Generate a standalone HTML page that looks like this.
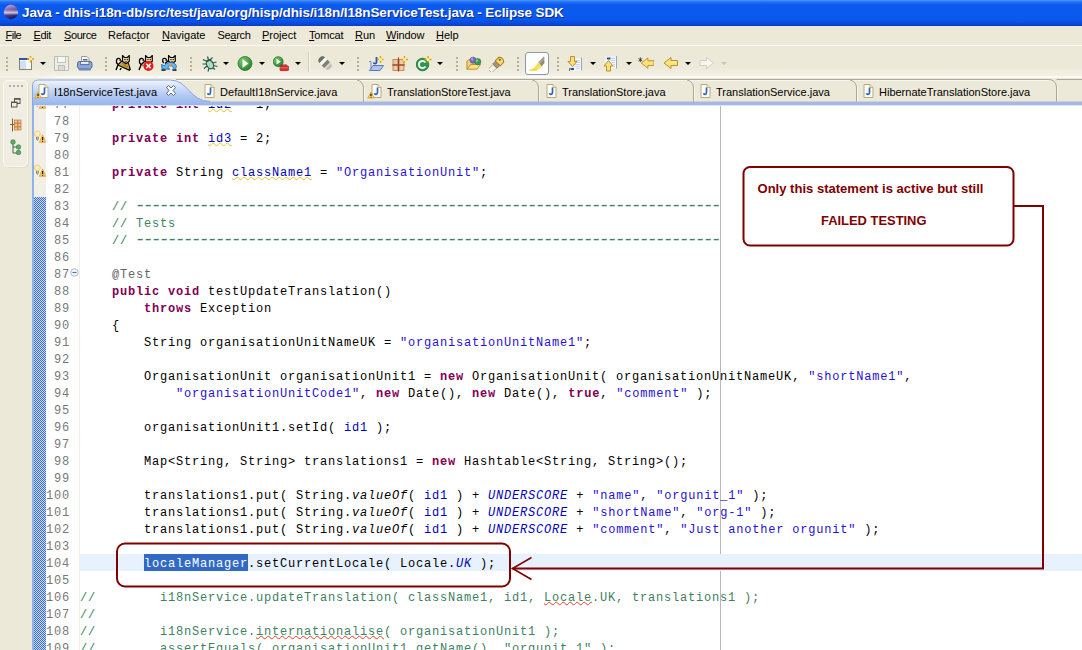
<!DOCTYPE html>
<html>
<head>
<meta charset="utf-8">
<title>Java - Eclipse SDK</title>
<style>
html,body{margin:0;padding:0}
body{width:1082px;height:650px;overflow:hidden;position:relative;background:#ECE9D8;font-family:"Liberation Sans",sans-serif;color:#000}
.abs{position:absolute}
#title{position:absolute;left:0;top:0;width:1082px;height:26px;background:linear-gradient(to bottom,#4A98FF 0px,#2070F4 2px,#0C58EA 5px,#0B5AF0 12px,#0B58EE 19px,#0A4CDC 23px,#0A3CC4 26px)}
#title .t{position:absolute;left:22px;top:4px;height:17px;line-height:17px;font-size:13.5px;font-weight:bold;color:#fff;white-space:nowrap;letter-spacing:-0.1px;text-shadow:1px 1px 0 #0A2A8C}
#menubar{position:absolute;left:0;top:26px;width:1082px;height:19px;background:#ECE9D8}
#menubar span{position:absolute;top:3px;font-size:11px;line-height:13px;white-space:nowrap;display:block}
#menubar u{text-decoration:underline;text-underline-offset:1px}
#tbline1{position:absolute;left:0;top:45px;width:1082px;height:1px;background:#FAF9F3}
#toolbar{position:absolute;left:0;top:46px;width:1082px;height:30px;background:linear-gradient(to bottom,#ECE9D8 0,#ECE9D8 21px,#F3F1E6 30px)}
#tbline2{position:absolute;left:0px;top:76px;width:1082px;height:2px;background:linear-gradient(to right,#F3F1E6 0,#F3F1E6 30px,#FBFAF5 60px)}
.grip{position:absolute;top:56px;width:2px;height:15px;background:repeating-linear-gradient(to bottom,transparent 0,transparent 1px,#B3B09C 1px,#B3B09C 3px,transparent 3px,transparent 4px)}
.dd{position:absolute;top:62px;width:0;height:0;border-left:3px solid transparent;border-right:3px solid transparent;border-top:3px solid #000}
.ico{position:absolute;top:56px;width:16px;height:16px}
/* side bar */
#side{position:absolute;left:4px;top:81px;width:23px;height:85px;border-radius:4px;background:#F0EEE2;box-shadow:0 0 0 1px #FAF9F3, 1px 1px 0 1px #E0DDCB}
/* tabs */
#tabrow{position:absolute;left:32px;top:80px;width:1050px;height:23px;background:#ECE9D8}
.tab{position:absolute;top:86px;font-size:11px;line-height:13px;white-space:nowrap}
/* editor */
#editor{position:absolute;left:34px;top:103px;width:1048px;height:547px;background:#fff;overflow:hidden}
#lborder{position:absolute;left:32px;top:96px;width:2px;height:554px;background:#8FB3EA}
#ruler{position:absolute;left:34px;top:103px;width:12px;height:547px;background:#F2F0E6}
#rulerdots{position:absolute;left:34px;top:197px;width:12px;height:453px;background:repeating-conic-gradient(#3E72C9 0 25%,#C9D6EE 0 50%) 0 0/2px 2px}
#gutterline{position:absolute;left:79px;top:103px;width:1px;height:547px;background:#F1EFE7}
#margin{position:absolute;left:720px;top:103px;width:1px;height:547px;background:#B8B8B8}
#curline{position:absolute;left:80px;top:554px;width:1002px;height:17px;background:#E8F2FE}
#sel{position:absolute;left:144px;top:554px;width:104px;height:17px;background:#316AC5}
pre{margin:0;position:absolute;font-family:"Liberation Mono",monospace;font-size:12px;letter-spacing:0.8px;line-height:17px;white-space:pre}
#nums{left:38px;top:97px;width:32px;text-align:right;color:#787878}
#code{left:80px;top:97px;color:#000}
.k{color:#7F0055;font-weight:bold}
.s{color:#2810D8}
.f{color:#0000C0}
.sf{color:#0000C0;font-style:italic}
.i{font-style:italic}
.c{color:#3F7F5F}
.a{color:#646464}
.d{font-size:18px;letter-spacing:-2.8px;line-height:0;position:relative;top:0.5px;margin-left:-1.4px;margin-right:1.4px}
.w{text-decoration:underline wavy #E6C81E 1px;text-underline-offset:0px}
.r{text-decoration:underline wavy #E0402C 1px;text-underline-offset:0px}
.selt{color:#fff}
#anno{position:absolute;left:0;top:0;width:1082px;height:650px}
</style>
</head>
<body>
<div id="title"><svg class="abs" style="left:3px;top:4px" width="16" height="16" viewBox="0 0 16 16"><defs><linearGradient id="eg" x1="0" y1="0" x2="0.300" y2="1"><stop offset="0" stop-color="#C8B0E0"/><stop offset="0.450" stop-color="#7A62B0"/><stop offset="1" stop-color="#1E1E68"/></linearGradient></defs><circle cx="8" cy="8" r="7.200" fill="url(#eg)"/><path d="M1 7.200 H15 M0.800 8.500 H15.200 M1 9.800 H15" stroke="#F4F0FA" stroke-width="0.700"/></svg><div class="t">Java - dhis-i18n-db/src/test/java/org/hisp/dhis/i18n/I18nServiceTest.java - Eclipse SDK</div></div>
<div id="menubar">
<span style="left:5.5px;letter-spacing:-0.5px"><u>F</u>ile</span>
<span style="left:33.5px;letter-spacing:-0.4px"><u>E</u>dit</span>
<span style="left:64px;letter-spacing:-0.4px"><u>S</u>ource</span>
<span style="left:108px">Refac<u>t</u>or</span>
<span style="left:162px"><u>N</u>avigate</span>
<span style="left:217.5px;letter-spacing:-0.3px">Se<u>a</u>rch</span>
<span style="left:262px"><u>P</u>roject</span>
<span style="left:309px;letter-spacing:-0.2px"><u>T</u>omcat</span>
<span style="left:355px"><u>R</u>un</span>
<span style="left:386px;letter-spacing:-0.15px"><u>W</u>indow</span>
<span style="left:436px"><u>H</u>elp</span>
</div>
<div id="tbline1"></div>
<div id="toolbar"></div>
<div id="tbline2"></div>
<div class="grip" style="left:6px"></div><div class="grip" style="left:105px"></div><div class="grip" style="left:190px"></div><div class="grip" style="left:357px"></div><div class="grip" style="left:456px"></div><div class="grip" style="left:517px"></div><div class="grip" style="left:557px"></div>
<div class="dd" style="left:40px"></div><div class="dd" style="left:223px"></div><div class="dd" style="left:259px"></div><div class="dd" style="left:295px"></div><div class="dd" style="left:339px"></div><div class="dd" style="left:437px"></div><div class="dd" style="left:590px"></div><div class="dd" style="left:626px"></div><div class="dd" style="left:685px"></div><div class="dd" style="left:721px;border-top-color:#C9C6B6"></div>
<div class="abs" style="left:308px;top:52px;width:1px;height:20px;background:#CFCCBC"></div><div class="abs" style="left:309px;top:52px;width:1px;height:20px;background:#F8F7F1"></div>
<div class="abs" style="left:525px;top:52px;width:22px;height:21px;border:1px solid #8D9AAE;border-radius:3px;background:#FDFDFB;box-sizing:content-box"></div>
<svg class="ico" style="left:18px" viewBox="0 0 16 16"><rect x="1.500" y="2.500" width="12" height="11" fill="#F4F8FD" stroke="#8A8468"/><rect x="1" y="2" width="13" height="2" fill="#2F56A6"/><rect x="2" y="5" width="6" height="8" fill="#CFE0F5"/><path d="M12.500 -0.500 V6.500 M9 3 H16" stroke="#E0A800" stroke-width="1.600"/><circle cx="12.500" cy="3" r="1.600" fill="#FFF3A0"/></svg>
<svg class="ico" style="left:54px" viewBox="0 0 16 16"><path d="M0.500 0.500 H14.500 V14.500 H0.500 Z" fill="#ECEBE4" stroke="#BDBDB8"/><rect x="3.500" y="0.500" width="8" height="6" fill="#F7F7F4" stroke="#C3C3BE"/><rect x="4.500" y="9.500" width="6" height="5" fill="#DCDCD6" stroke="#BDBDB8"/></svg>
<svg class="ico" style="left:77px" viewBox="0 0 16 16"><path d="M4.500 6 V0.500 H10 L12 2.500 V6" fill="#F6F6F6" stroke="#9A9A9A"/><path d="M6 3.500 H10.500 M6 5 H10.500" stroke="#6A6A6A"/><rect x="0.500" y="5.500" width="14.500" height="7" rx="2" fill="#8FA6D4" stroke="#4A66A8"/><rect x="3.500" y="5.500" width="8.500" height="3" fill="#E9EEF8" stroke="#5E76B0"/><rect x="1.500" y="12" width="12.500" height="2.500" rx="1" fill="#6F88C0"/></svg>
<svg class="ico" style="left:115px;top:55px" viewBox="0 0 16 16"><path d="M3 9.500 C0 7 1.500 2.500 4.500 3.500 C5.500 4 5.500 5 5 6" fill="none" stroke="#000" stroke-width="1.300"/><path d="M7.500 5.500 L3 10 L1 15 M5 15 L7 11.500 M3.500 10 L15 15.500 M13 7.500 L15.300 15" fill="none" stroke="#000" stroke-width="1.400"/><path d="M7.500 6 L11 9 L13 8 L14.500 14.500 L4 10 Z" fill="#C9A23A"/><path d="M7 8 L9 9.500 M8.500 10.500 L11 10 M10 12 L13 11.500" stroke="#8A6A18" stroke-width="0.800"/><path d="M7.500 0.500 L9.500 2.500 H12.300 L14.300 0.500 V6.300 L11 8.800 L7.500 6.300 Z" fill="#EBD3A4" stroke="#000" stroke-width="1.100" stroke-linejoin="round"/><path d="M9.300 4.600 h1.200 M11.700 4.600 h1.200 M11 6 v1.600" stroke="#000" stroke-width="1"/></svg>
<svg class="ico" style="left:138px;top:55px" viewBox="0 0 16 16"><path d="M3 9.500 C0 7 1.500 2.500 4.500 3.500 C5.500 4 5.500 5 5 6" fill="none" stroke="#000" stroke-width="1.300"/><path d="M7.500 5.500 L3 10 L1 15 M13.500 6 V8" fill="none" stroke="#000" stroke-width="1.400"/><path d="M3.500 11 L6.500 10" stroke="#E08030" stroke-width="1.600"/><path d="M7.500 0.500 L9.500 2.500 H12.300 L14.300 0.500 V6.300 L11 8.800 L7.500 6.300 Z" fill="#EBD3A4" stroke="#000" stroke-width="1.100" stroke-linejoin="round"/><path d="M9.300 4.600 h1.200 M11.700 4.600 h1.200 M11 6 v1.600" stroke="#000" stroke-width="1"/><circle cx="10.500" cy="11" r="5" fill="#E61A1A"/><path d="M8.300 8.800 L12.700 13.200 M12.700 8.800 L8.300 13.200" stroke="#fff" stroke-width="1.600"/></svg>
<svg class="ico" style="left:161px;top:55px" viewBox="0 0 16 16"><path d="M3 8 C0.500 6 1.500 2.500 4.500 3.500 C5.500 4 5.500 5 5 6" fill="none" stroke="#000" stroke-width="1.300"/><path d="M7.500 5.500 L4 8.500 M0.500 15 H4.500 M11.500 15 H15.500" fill="none" stroke="#000" stroke-width="1.400"/><path d="M7.500 0.500 L9.500 2.500 H12.300 L14.300 0.500 V6.300 L11 8.800 L7.500 6.300 Z" fill="#EBD3A4" stroke="#000" stroke-width="1.100" stroke-linejoin="round"/><path d="M9.300 4.600 h1.200 M11.700 4.600 h1.200 M11 6 v1.600" stroke="#000" stroke-width="1"/><path d="M1 14 L0.500 9.500 L3.500 10.800 C5 6.800 12.500 6 15 10 C16 12.500 14.500 14.500 12 14.800 C13 11.800 11 10.200 8.800 10.600 C6.800 11 7 12.500 7.500 13 L8.800 14.300 Z" fill="#62B8F0" stroke="#1C5FA8" stroke-width="0.800"/><path d="M7.500 10.800 L10.800 9.300 L12 11.200 L9.500 11.800 Z" fill="#E8922A"/></svg>
<svg class="ico" style="left:202px" viewBox="0 0 16 16"><path d="M5.500 0.500 L6.500 4 M10.500 1.500 L8 4 M1 3.500 L5 5.500 M0.500 8 H4.500 M2 12.500 L5 10 M6 15.500 L7 12 M14.500 6 L11 7 M15.500 10.500 L11.500 9.500 M13 13.500 L10.500 11.500" stroke="#2B5B48" stroke-width="1.200" fill="none"/><ellipse cx="8" cy="8.500" rx="3.300" ry="4.600" transform="rotate(-28 8 8.500)" fill="#A9DDC0" stroke="#2B5B48" stroke-width="1.200"/><path d="M4.500 5.500 L8 3.500" stroke="#2B5B48" stroke-width="2"/></svg>
<svg class="ico" style="left:237px" viewBox="0 0 16 16"><defs><radialGradient id="gr1" cx="0.350" cy="0.300" r="0.800"><stop offset="0" stop-color="#7CCB6C"/><stop offset="1" stop-color="#1E7A2C"/></radialGradient></defs><circle cx="8" cy="7.500" r="7" fill="url(#gr1)" stroke="#2A7A34" stroke-width="0.800"/><path d="M5.500 3 L11.500 7.500 L5.500 12 Z" fill="#F4FBEF"/></svg>
<svg class="ico" style="left:273px" viewBox="0 0 17 16"><circle cx="5.500" cy="5.500" r="5.300" fill="url(#gr1)" stroke="#2A7A34" stroke-width="0.800"/><path d="M3.800 2.500 L8.300 5.500 L3.800 8.500 Z" fill="#F4FBEF"/><path d="M9.500 10 V9 H14 V10" fill="none" stroke="#A81818" stroke-width="1.200"/><rect x="7.500" y="10" width="9" height="5" rx="1" fill="#D83030" stroke="#A81818" stroke-width="0.800"/><path d="M7.500 12 H16.500" stroke="#F08080" stroke-width="0.800"/></svg>
<svg class="ico" style="left:317px" viewBox="0 0 16 16"><g transform="rotate(45 8 7)"><rect x="0.500" y="3" width="15" height="8" rx="4" fill="#B9B9B0"/><rect x="4" y="3" width="3.500" height="8" fill="#F4F4F0"/><rect x="7.500" y="3" width="3.500" height="8" fill="#7E8078"/><rect x="11" y="3" width="2" height="8" fill="#D8D8D0"/><path d="M0.500 7 a4 4 0 0 1 3.500 -4 v8 a4 4 0 0 1 -3.500 -4" fill="#6E7068"/></g></svg>
<svg class="ico" style="left:368px" viewBox="0 0 16 16"><path d="M1 5.500 H3 V12.500" fill="none" stroke="#6F8CC8" stroke-width="1"/><path d="M1.500 14.500 L5 9.500 H15.500 L12 14.500 Z" fill="#AFC4EC" stroke="#5878BC" stroke-width="1"/><path d="M8.500 1 V6 C8.500 8 6 8 5.500 6.500" fill="none" stroke="#2A55A8" stroke-width="1.800"/><path d="M12.500 0 V7 M9.500 3.500 H15.500" stroke="#E0A800" stroke-width="1.500"/><circle cx="12.500" cy="3.500" r="1.500" fill="#FFF3A0"/></svg>
<svg class="ico" style="left:392px" viewBox="0 0 16 16"><rect x="1" y="3.500" width="5" height="5" fill="#F2C9A4" stroke="#B87848" stroke-width="0.800"/><rect x="7" y="3.500" width="5" height="5" fill="#F2C9A4" stroke="#B87848" stroke-width="0.800"/><rect x="1" y="9.500" width="5" height="5" fill="#F2C9A4" stroke="#B87848" stroke-width="0.800"/><rect x="7" y="9.500" width="5" height="5" fill="#F2C9A4" stroke="#B87848" stroke-width="0.800"/><path d="M6.500 1.500 V15.500 M0 9 H13" stroke="#8B4A2B" stroke-width="1.200"/><path d="M12.500 0 V6.500 M9 3.500 H16" stroke="#E0A800" stroke-width="1.500"/><circle cx="12.500" cy="3.500" r="1.500" fill="#FFF3A0"/></svg>
<svg class="ico" style="left:416px" viewBox="0 0 16 16"><circle cx="6.500" cy="8.500" r="6.300" fill="#2F9650" stroke="#1E6E38" stroke-width="0.800"/><path d="M9.500 6.500 A3.600 3.600 0 1 0 9.500 10.500" fill="none" stroke="#EAF8EE" stroke-width="2"/><path d="M12 0 V6.500 M8.500 3.500 H15.500" stroke="#E0A800" stroke-width="1.500"/><circle cx="12" cy="3.500" r="1.500" fill="#FFF3A0"/></svg>
<svg class="ico" style="left:466px" viewBox="0 0 17 16"><path d="M1 13.500 V5 L3 3.500 H6.500 L8 5 H11 V8" fill="#F7D674" stroke="#B88A20" stroke-width="1"/><path d="M1 13.500 L5 8.500 H15.500 L11.500 13.500 Z" fill="#FBE08A" stroke="#B88A20" stroke-width="1"/><circle cx="7.500" cy="4" r="3.300" fill="#7A6CC8" stroke="#4A3E98" stroke-width="0.600"/><circle cx="6.500" cy="3" r="1.200" fill="#B8B0E8"/><circle cx="12.500" cy="5.500" r="3.300" fill="#3E9A5A" stroke="#24703C" stroke-width="0.600"/><circle cx="11.500" cy="4.500" r="1.200" fill="#8ED0A0"/></svg>
<svg class="ico" style="left:489px" viewBox="0 0 16 16"><g transform="rotate(-45 8 8)"><rect x="-2" y="5.500" width="7" height="5" fill="#FBF6E4" stroke="#B0A488" stroke-width="0.800"/><rect x="5" y="5" width="4" height="6" fill="#A39686" stroke="#7A6E60" stroke-width="0.800"/><path d="M9 4.500 H14 Q17.500 8 14 11.500 H9 Z" fill="#F6D874" stroke="#A87C20" stroke-width="1"/><circle cx="13" cy="7" r="1" fill="#7A5A10"/></g></svg>
<svg class="ico" style="left:529px" viewBox="0 0 16 16"><path d="M15 0.500 L9.500 6 L12.500 10.500 L15.500 7 Z" fill="#8E8A7E"/><path d="M15 0.500 L9.500 6 L11 8 L15.500 3 Z" fill="#A8A498"/><path d="M9.500 6 L12.500 10.500 C10 14.500 6 14.500 0.500 14 C5 13.500 6.500 10 9.500 6 Z" fill="#F8E04C"/><path d="M0.500 14 H8" stroke="#E8C820" stroke-width="1"/></svg>
<svg class="ico" style="left:567px" viewBox="0 0 16 16"><rect x="6.500" y="2.500" width="8" height="12" fill="#F4F7FC"/><path d="M14.500 1.500 V14.500" stroke="#9AA4B8" stroke-width="1"/><path d="M8 4.500 H13 M8 6.500 H13 M8 8.500 H13 M8 10.500 H13 M9 12.500 H13" stroke="#C4D2EC" stroke-width="1"/><path d="M2.500 12 V15" stroke="#6C7890" stroke-width="1"/><rect x="3.500" y="12" width="3.500" height="2" fill="#2E4E9C"/><path d="M3.500 0.500 H7.500 V5.500 H10 L5.500 10.500 L1 5.500 H3.500 Z" fill="#FFE07A" stroke="#B8902C" stroke-width="1"/></svg>
<svg class="ico" style="left:603px" viewBox="0 0 16 16"><rect x="2.500" y="0.500" width="11" height="12" fill="#F4F7FC"/><path d="M13.500 0 V12.500" stroke="#9AA4B8" stroke-width="1"/><path d="M8 2.500 H12 M8 4.500 H12 M9 6.500 H12 M10 8.500 H12 M10 10.500 H12" stroke="#C4D2EC" stroke-width="1"/><rect x="4" y="1.500" width="3.500" height="2" fill="#2E4E9C"/><path d="M3.500 15 H7.500 V10 H10 L5.500 4.500 L1 10 H3.500 Z" fill="#FFE07A" stroke="#B8902C" stroke-width="1"/></svg>
<svg class="ico" style="left:638px" viewBox="0 0 17 16"><path d="M2.500 1 V6 M0.500 2.200 L4.500 4.800 M4.500 2.200 L0.500 4.800" stroke="#303030" stroke-width="0.900"/><path d="M17 4.500 V9.500 H10.500 V12.500 L3.500 7 L10.500 1.500 V4.500 Z" fill="#FFE07A" stroke="#B8902C" stroke-width="1"/></svg>
<svg class="ico" style="left:663px" viewBox="0 0 16 16"><path d="M14.500 4.500 V9.500 H8 V12.500 L1 7 L8 1.500 V4.500 Z" fill="#FFE07A" stroke="#B8902C" stroke-width="1"/><path d="M8.500 5.500 H13.500 V6.500 H8.500 Z" fill="#FFF0B8"/></svg>
<svg class="ico" style="left:699px" viewBox="0 0 16 16"><path d="M1 4.500 V9.500 H7.500 V12.500 L14.500 7 L7.500 1.500 V4.500 Z" fill="#F7F6F0" stroke="#D2CFC0" stroke-width="1"/></svg>
<div id="side"></div>
<div class="abs" style="left:9px;top:85px;width:14px;height:2px;background:repeating-linear-gradient(to right,#B3B09C 0,#B3B09C 2px,transparent 2px,transparent 4px)"></div>
<svg class="abs" style="left:11px;top:98px" width="10" height="10" viewBox="0 0 10 10"><rect x="3.500" y="1" width="5.500" height="4.500" fill="#F1EFE4" stroke="#55524A" stroke-width="1"/><path d="M3 0.800 H9.500" stroke="#55524A" stroke-width="1.400"/><rect x="0.500" y="4.500" width="5.500" height="4.500" fill="#F1EFE4" stroke="#55524A" stroke-width="1"/><path d="M0 4.300 H6.500" stroke="#55524A" stroke-width="1.400"/></svg>
<svg class="abs" style="left:10px;top:118px" width="12" height="14" viewBox="0 0 12 14"><path d="M2.500 0.500 V13.500 M0 6.500 H5" stroke="#8B5A2B" stroke-width="1"/><rect x="4.500" y="2" width="3" height="3" fill="#F4C096" stroke="#C07838" stroke-width="0.700"/><rect x="8" y="2" width="3" height="3" fill="#F4C096" stroke="#C07838" stroke-width="0.700"/><rect x="4.500" y="5.500" width="3" height="3" fill="#F4C096" stroke="#C07838" stroke-width="0.700"/><rect x="8" y="5.500" width="3" height="3" fill="#F4C096" stroke="#C07838" stroke-width="0.700"/><rect x="4.500" y="9" width="3" height="3" fill="#F4C096" stroke="#C07838" stroke-width="0.700"/><rect x="8" y="9" width="3" height="3" fill="#F4C096" stroke="#C07838" stroke-width="0.700"/></svg>
<svg class="abs" style="left:10px;top:139px" width="12" height="16" viewBox="0 0 12 16"><path d="M3 4 V14 H8 M3 8 H8" fill="none" stroke="#3A6A48" stroke-width="1"/><circle cx="3" cy="3" r="2.300" fill="#5EA868" stroke="#38784A" stroke-width="0.600"/><circle cx="8.500" cy="8" r="2.300" fill="#5EA868" stroke="#38784A" stroke-width="0.600"/><circle cx="8.500" cy="13.500" r="2.300" fill="#5EA868" stroke="#38784A" stroke-width="0.600"/></svg>
<div id="editor"></div>
<div id="ruler"></div>
<div id="rulerdots"></div>
<div id="gutterline"></div>
<div id="margin"></div>
<div id="curline"></div>
<div id="sel"></div>
<pre id="nums">77
78
79
80
81
82
83
84
85
86
87
88
89
90
91
92
93
94
95
96
97
98
99
100
101
102
103
104
105
106
107
108
109</pre>
<pre id="code">    <span class="k">private</span> <span class="k">int</span> <span class="f w">id2</span> = 1;

    <span class="k">private</span> <span class="k">int</span> <span class="f w">id3</span> = 2;

    <span class="k">private</span> String <span class="f w">className1</span> = <span class="s">"OrganisationUnit"</span>;

    <span class="c">// <span class="d">-------------------------------------------------------------------------</span></span>
    <span class="c">// Tests</span>
    <span class="c">// <span class="d">-------------------------------------------------------------------------</span></span>

    <span class="a">@Test</span>
    <span class="k">public</span> <span class="k">void</span> testUpdateTranslation()
        <span class="k">throws</span> Exception
    {
        String organisationUnitNameUK = <span class="s">"organisationUnitName1"</span>;

        OrganisationUnit organisationUnit1 = <span class="k">new</span> OrganisationUnit( organisationUnitNameUK, <span class="s">"shortName1"</span>,
            <span class="s">"organisationUnitCode1"</span>, <span class="k">new</span> Date(), <span class="k">new</span> Date(), <span class="k">true</span>, <span class="s">"comment"</span> );

        organisationUnit1.setId( <span class="f">id1</span> );

        Map&lt;String, String&gt; translations1 = <span class="k">new</span> Hashtable&lt;String, String&gt;();

        translations1.put( String.<span class="i">valueOf</span>( <span class="f">id1</span> ) + <span class="sf">UNDERSCORE</span> + <span class="s">"name"</span>, <span class="s">"orgunit_1"</span> );
        translations1.put( String.<span class="i">valueOf</span>( <span class="f">id1</span> ) + <span class="sf">UNDERSCORE</span> + <span class="s">"shortName"</span>, <span class="s">"org-1"</span> );
        translations1.put( String.<span class="i">valueOf</span>( <span class="f">id1</span> ) + <span class="sf">UNDERSCORE</span> + <span class="s">"comment"</span>, <span class="s">"Just another orgunit"</span> );

        <span class="selt">localeManager</span>.setCurrentLocale( Locale.<span class="sf">UK</span> );

<span class="c">//        i18nService.updateTranslation( className1, id1, <span class="r">Locale</span>.UK, translations1 );</span>
<span class="c">//</span>
<span class="c">//        i18nService.<span class="r">internationalise</span>( organisationUnit1 );</span>
<span class="c">//        assertEquals( organisationUnit1.getName(), "<span class="r">orgunit</span>_1" );</span></pre>
<svg class="abs" style="left:34px;top:96px" width="12" height="14" viewBox="0 0 12 14"><circle cx="3.400" cy="3.900" r="2.900" fill="#FCEFB0" stroke="#EDBE82" stroke-width="0.800"/><path d="M2.600 7 V9.500 Q3.400 10.800 4.200 9.500 V7" fill="#EDE3B0" stroke="#5C7460" stroke-width="0.900"/><path d="M8.600 4.800 L5.300 12.300 H11.900 Z" fill="#F8C95E" stroke="#E0A040" stroke-width="0.800" stroke-linejoin="round"/><path d="M8.600 7 V10 M8.600 10.800 V11.800" stroke="#201000" stroke-width="1.100"/></svg>
<svg class="abs" style="left:34px;top:130px" width="12" height="14" viewBox="0 0 12 14"><circle cx="3.400" cy="3.900" r="2.900" fill="#FCEFB0" stroke="#EDBE82" stroke-width="0.800"/><path d="M2.600 7 V9.500 Q3.400 10.800 4.200 9.500 V7" fill="#EDE3B0" stroke="#5C7460" stroke-width="0.900"/><path d="M8.600 4.800 L5.300 12.300 H11.900 Z" fill="#F8C95E" stroke="#E0A040" stroke-width="0.800" stroke-linejoin="round"/><path d="M8.600 7 V10 M8.600 10.800 V11.800" stroke="#201000" stroke-width="1.100"/></svg>
<svg class="abs" style="left:34px;top:164px" width="12" height="14" viewBox="0 0 12 14"><circle cx="3.400" cy="3.900" r="2.900" fill="#FCEFB0" stroke="#EDBE82" stroke-width="0.800"/><path d="M2.600 7 V9.500 Q3.400 10.800 4.200 9.500 V7" fill="#EDE3B0" stroke="#5C7460" stroke-width="0.900"/><path d="M8.600 4.800 L5.300 12.300 H11.900 Z" fill="#F8C95E" stroke="#E0A040" stroke-width="0.800" stroke-linejoin="round"/><path d="M8.600 7 V10 M8.600 10.800 V11.800" stroke="#201000" stroke-width="1.100"/></svg>
<svg class="abs" style="left:70px;top:268px" width="9" height="9" viewBox="0 0 9 9"><circle cx="4.500" cy="4.500" r="3.800" fill="#EEF2F7" stroke="#A9B9CE" stroke-width="0.900"/><path d="M2.500 4.500 H6.500" stroke="#55708F" stroke-width="1"/></svg>
<div id="tabrow"></div>
<div id="lborder"></div>
<svg id="tabsvg" class="abs" style="left:0;top:78px" width="1082" height="28" viewBox="0 78 1082 28">
<defs>
<linearGradient id="tg" gradientUnits="userSpaceOnUse" x1="0" y1="80" x2="0" y2="105"><stop offset="0" stop-color="#F1F5FD"/><stop offset="0.250" stop-color="#D6E2F9"/><stop offset="0.600" stop-color="#B3CAF3"/><stop offset="1" stop-color="#98B5EB"/></linearGradient>
</defs>
<path d="M176 79.500 H1049 Q1055.500 79.500 1056.500 87 V102 M1056.500 79.500 H1082" fill="none" stroke="#ACA893" stroke-width="1"/>
<path d="M176 80.500 H1049" fill="none" stroke="#F6F5EE" stroke-width="1"/>
<path d="M357 80 Q362.500 81 363.500 87 V102 M532 80 Q537.500 81 538.500 87 V102 M687 80 Q692.500 81 693.500 87 V102 M850 80 Q855.500 81 856.500 87 V102" fill="none" stroke="#ACA893" stroke-width="1"/>
<path d="M364.500 87 V102 M539.500 87 V102 M694.500 87 V102 M857.500 87 V102 M1057.500 87 V102" fill="none" stroke="#F6F5EE" stroke-width="1"/>
<path d="M32 106 V86 Q32 79.500 38.500 79.500 H170 C188 79.500 190 101.500 210 101.500 H1082 V105 H34 V107 Z" fill="url(#tg)"/>
<path d="M32.500 106 V86 Q32.500 80 38.500 80 H170 C188 80 190 101.500 210 101.500" fill="none" stroke="#86A8E6" stroke-width="1"/>
<rect x="212" y="102" width="870" height="3" fill="#A6B7E2"/>
<rect x="34" y="105" width="1048" height="1" fill="#DDE5F6"/>
<g transform="translate(38.5 84)"><path d="M0.500 0.500 H6.500 L9.500 3.500 V13.500 H0.500 Z" fill="#FFFFFF" stroke="#B9A874" stroke-width="1"/><path d="M6.500 0.500 V3.500 H9.500" fill="#F3E9C8" stroke="#B9A874" stroke-width="0.800"/><path d="M6 3.500 V8.500 C6 10.800 3.400 10.800 3 9.200" fill="none" stroke="#2F62B8" stroke-width="1.700"/><path d="M-0.500 8 L-3.800 14 H2.800 Z" fill="#FAD56E" stroke="#D8A030" stroke-width="0.800" stroke-linejoin="round"/><path d="M-0.500 9.800 V12 M-0.500 12.700 V13.600" stroke="#1A1000" stroke-width="1.200"/></g><g transform="translate(204.5 84)"><path d="M0.500 0.500 H6.500 L9.500 3.500 V13.500 H0.500 Z" fill="#FFFFFF" stroke="#B9A874" stroke-width="1"/><path d="M6.500 0.500 V3.500 H9.500" fill="#F3E9C8" stroke="#B9A874" stroke-width="0.800"/><path d="M6 3.500 V8.500 C6 10.800 3.400 10.800 3 9.200" fill="none" stroke="#2F62B8" stroke-width="1.700"/></g><g transform="translate(371.5 84)"><path d="M0.500 0.500 H6.500 L9.500 3.500 V13.500 H0.500 Z" fill="#FFFFFF" stroke="#B9A874" stroke-width="1"/><path d="M6.500 0.500 V3.500 H9.500" fill="#F3E9C8" stroke="#B9A874" stroke-width="0.800"/><path d="M6 3.500 V8.500 C6 10.800 3.400 10.800 3 9.200" fill="none" stroke="#2F62B8" stroke-width="1.700"/><path d="M-0.500 8 L-3.800 14 H2.800 Z" fill="#FAD56E" stroke="#D8A030" stroke-width="0.800" stroke-linejoin="round"/><path d="M-0.500 9.800 V12 M-0.500 12.700 V13.600" stroke="#1A1000" stroke-width="1.200"/></g><g transform="translate(546.5 84)"><path d="M0.500 0.500 H6.500 L9.500 3.500 V13.500 H0.500 Z" fill="#FFFFFF" stroke="#B9A874" stroke-width="1"/><path d="M6.500 0.500 V3.500 H9.500" fill="#F3E9C8" stroke="#B9A874" stroke-width="0.800"/><path d="M6 3.500 V8.500 C6 10.800 3.400 10.800 3 9.200" fill="none" stroke="#2F62B8" stroke-width="1.700"/></g><g transform="translate(700.5 84)"><path d="M0.500 0.500 H6.500 L9.500 3.500 V13.500 H0.500 Z" fill="#FFFFFF" stroke="#B9A874" stroke-width="1"/><path d="M6.500 0.500 V3.500 H9.500" fill="#F3E9C8" stroke="#B9A874" stroke-width="0.800"/><path d="M6 3.500 V8.500 C6 10.800 3.400 10.800 3 9.200" fill="none" stroke="#2F62B8" stroke-width="1.700"/></g><g transform="translate(863.5 84)"><path d="M0.500 0.500 H6.500 L9.500 3.500 V13.500 H0.500 Z" fill="#FFFFFF" stroke="#B9A874" stroke-width="1"/><path d="M6.500 0.500 V3.500 H9.500" fill="#F3E9C8" stroke="#B9A874" stroke-width="0.800"/><path d="M6 3.500 V8.500 C6 10.800 3.400 10.800 3 9.200" fill="none" stroke="#2F62B8" stroke-width="1.700"/></g>
<path d="M166.500 87.500 L168.500 85.500 L171 88 L173.500 85.500 L175.500 87.500 L173 90.500 L175.500 93.500 L173.500 95.500 L171 93 L168.500 95.500 L166.500 93.500 L169 90.500 Z" fill="#FFFFFF" stroke="#56688C" stroke-width="1" stroke-linejoin="round"/>
</svg>
<div class="tab" style="left:54px;letter-spacing:0.08px">I18nServiceTest.java</div>
<div class="tab" style="left:220px;letter-spacing:0.05px">DefaultI18nService.java</div>
<div class="tab" style="left:387px">TranslationStoreTest.java</div>
<div class="tab" style="left:562px">TranslationStore.java</div>
<div class="tab" style="left:716px">TranslationService.java</div>
<div class="tab" style="left:879px">HibernateTranslationStore.java</div>
<svg id="anno" width="1082" height="650" viewBox="0 0 1082 650">
<g fill="none" stroke="#800000" stroke-width="2">
<rect x="117" y="543.5" width="393" height="43" rx="8" ry="8"/>
<rect x="743.5" y="167" width="270" height="78.5" rx="6.5" ry="6.5"/>
<path d="M1014 206 H1043 V568.5 H512.5"/>
<path d="M531.5 557.5 L512.5 568.5 L531.5 579.5" stroke-width="1.6"/>
</g>
<g font-family="Liberation Sans, sans-serif" font-weight="bold" font-size="13" fill="#800000">
<text id="at1" x="757.5" y="192.5" textLength="226" lengthAdjust="spacingAndGlyphs">Only this statement is active but still</text>
<text id="at2" x="821" y="224.5" textLength="105.5" lengthAdjust="spacingAndGlyphs">FAILED TESTING</text>
</g>
</svg>
</body>
</html>
